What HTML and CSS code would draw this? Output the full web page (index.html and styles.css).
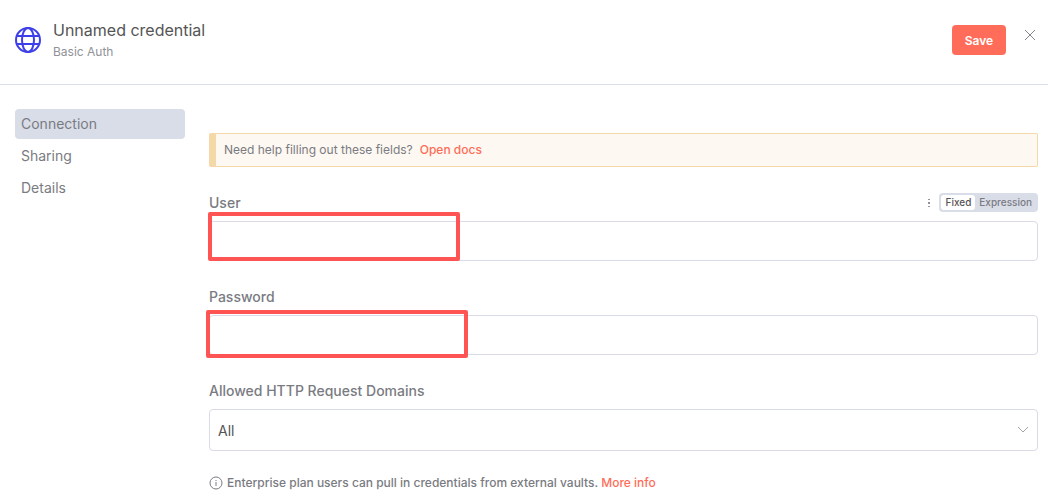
FILE: index.html
```html
<!DOCTYPE html>
<html lang="en">
  <head>
    <meta charset="UTF-8" />
    <meta name="viewport" content="width=device-width, initial-scale=1.0" />
    <title>Unnamed credential</title>
    <link rel="stylesheet" href="styles.css">
  </head>
  <body>
    <header class="header">
      <svg class="globe" viewBox="0 0 26 26" aria-hidden="true">
        <circle cx="13" cy="13" r="12" />
        <ellipse cx="13" cy="13" rx="6" ry="12" />
        <path d="M2 9h22M2 17h22" />
      </svg>
      <div class="title">
        <h1>Unnamed credential</h1>
        <p>Basic Auth</p>
      </div>
      <button class="save" type="button">Save</button>
      <button class="close" type="button" aria-label="Close">
        <svg viewBox="0 0 12 12" aria-hidden="true">
          <path d="M1 1l10 10M11 1L1 11" />
        </svg>
      </button>
    </header>

    <div class="container">
      <nav class="menu">
        <a class="menu-item active" href="#connection">Connection</a>
        <a class="menu-item" href="#sharing">Sharing</a>
        <a class="menu-item" href="#details">Details</a>
      </nav>

      <main class="content">
        <div class="callout">
          <span>Need help filling out these fields?</span>
          <a href="#docs">Open docs</a>
        </div>

        <div class="field">
          <div class="field-head">
            <label for="user">User</label>
            <div class="options">
              <button class="more" type="button" aria-label="Options">
                <svg viewBox="0 0 4 10" aria-hidden="true">
                  <path d="M1 1h2v1H1zM1 4h2v2H1zM1 8h2v1H1z" />
                </svg>
              </button>
              <div class="toggle">
                <button class="selected" type="button">Fixed</button>
                <button type="button">Expression</button>
              </div>
            </div>
          </div>
          <div class="field-box">
            <input id="user" type="text" />
            <span class="mark mark-user"></span>
          </div>
        </div>

        <div class="field">
          <div class="field-head">
            <label for="password">Password</label>
          </div>
          <div class="field-box">
            <input id="password" type="password" />
            <span class="mark mark-password"></span>
          </div>
        </div>

        <div class="field">
          <div class="field-head">
            <label for="domains">Allowed HTTP Request Domains</label>
          </div>
          <div class="field-box">
            <select id="domains">
              <option>All</option>
            </select>
            <svg class="arrow" viewBox="0 0 12 12" aria-hidden="true">
              <path d="M1 3l5 5 5-5" />
            </svg>
          </div>
        </div>

        <p class="info">
          <svg viewBox="0 0 14 14" aria-hidden="true">
            <circle cx="7" cy="7" r="6" />
            <path d="M7 6v4M7 4v1" />
          </svg>
          <span>Enterprise plan users can pull in credentials from external vaults. <a href="#more">More info</a></span>
        </p>
      </main>
    </div>
  </body>
</html>
```

FILE: styles.css
```css
* {
  box-sizing: border-box;
}

body {
  margin: 0;
  background-color: #fff;
  color: #7a7b82;
  font-family: Inter, "Liberation Sans", sans-serif;
  font-size: 14px;
}

h1,
p {
  margin: 0;
  font-weight: 400;
}

a {
  color: #ff6d5a;
  text-decoration: none;
}

button,
input,
select {
  font-family: inherit;
}

button {
  padding: 0;
  border: none;
  background: none;
  cursor: pointer;
}

svg {
  display: block;
  fill: none;
}

/* Header */
.header {
  display: flex;
  align-items: center;
  padding: 20px 12px 24px 15px;
  border-bottom: 1px solid #d9dee8;
}

.globe {
  width: 26px;
  height: 26px;
  margin-right: 12px;
  stroke: #3d40ea;
  stroke-width: 2;
}

.title {
  flex: 1;
}

.title h1 {
  color: #555;
  font-size: 16px;
  line-height: 20px;
}

.title p {
  padding-top: 4px;
  color: #909298;
  font-size: 12px;
  line-height: 16px;
}

.save {
  width: 54px;
  height: 30px;
  border-radius: 4px;
  background-color: #ff6d5a;
  color: #fff;
  font-size: 12px;
  font-weight: 600;
}

.close {
  margin: 0 0 10px 18px;
}

.close svg {
  width: 12px;
  height: 12px;
  stroke: #85868c;
}

/* Layout below the header */
.container {
  display: flex;
  gap: 24px;
  padding: 24px 10px 10px 15px;
}

.menu {
  display: flex;
  flex: 0 0 170px;
  flex-direction: column;
  gap: 2px;
}

.menu-item {
  padding: 0 6px;
  border-radius: 4px;
  color: #7a7b82;
  line-height: 30px;
}

.menu-item.active {
  background-color: #d9dde8;
}

.content {
  display: flex;
  flex: 1;
  flex-direction: column;
  gap: 26px;
  padding-top: 24px;
}

.callout {
  display: flex;
  gap: 7px;
  padding: 0 8px;
  border: 1px solid #f5d8a8;
  border-left-width: 7px;
  border-radius: 2px;
  background-color: #fdf8f1;
  font-size: 12px;
  line-height: 32px;
}

.callout a {
  font-weight: 500;
}

/* Form fields */
.field-head {
  display: flex;
  align-items: center;
  justify-content: space-between;
  height: 19px;
  margin-bottom: 9px;
}

.field-head label {
  font-weight: 500;
  line-height: 18px;
}

.field-box {
  position: relative;
}

.field-box input,
.field-box select {
  display: block;
  width: 100%;
  height: 40px;
  padding: 0 8px;
  border: 1px solid #d9dce8;
  border-radius: 4px;
  background-color: #fff;
  color: #555;
  font-size: 14px;
}

.field-box select {
  height: 42px;
  appearance: none;
}

.arrow {
  position: absolute;
  top: 15px;
  right: 9px;
  width: 12px;
  height: 12px;
  stroke: #a4a5ab;
  pointer-events: none;
}

.options,
.toggle {
  display: flex;
  align-items: center;
}

.options {
  gap: 8px;
}

.more svg {
  width: 4px;
  height: 10px;
  fill: #909298;
}

.toggle {
  padding: 2px;
  border-radius: 4px;
  background-color: #d9dde8;
}

.toggle button {
  padding: 0 4px;
  border-radius: 3px;
  color: #7a7b82;
  font-size: 10px;
  font-weight: 500;
  line-height: 15px;
}

.toggle .selected {
  background-color: #fff;
  color: #555;
}

/* Highlight frames over the inputs */
.mark {
  position: absolute;
  border: 4px solid #ff5454;
  border-radius: 2px;
  pointer-events: none;
}

.mark-user {
  top: -9px;
  left: -1px;
  width: 252px;
  height: 49px;
}

.mark-password {
  top: -5px;
  left: -3px;
  width: 262px;
  height: 48px;
}

.info {
  display: flex;
  align-items: center;
  gap: 4px;
  font-size: 12px;
  font-weight: 500;
  line-height: 12px;
}

.info svg {
  width: 14px;
  height: 14px;
  margin: -1px 0;
  stroke: #7a7b82;
}
```
